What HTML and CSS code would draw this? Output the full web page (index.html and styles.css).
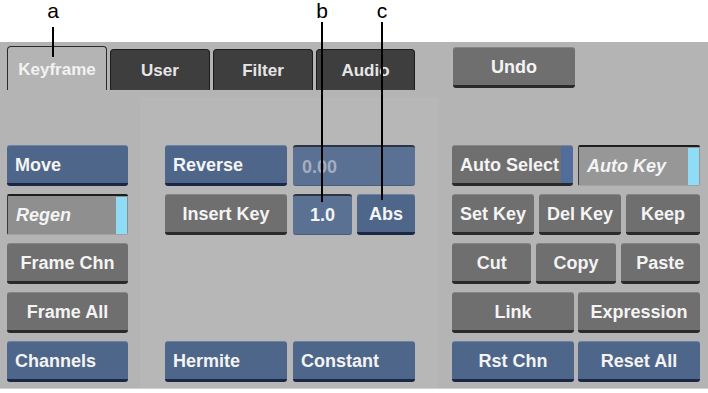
FILE: index.html
```html
<!DOCTYPE html>
<html lang="en">
<head>
  <meta charset="UTF-8" />
  <title>Keyframe Controls</title>
  <link rel="stylesheet" href="styles.css">
</head>
<body>
  <div class="page">
    <div class="callout callout-a"><span>a</span><i></i></div>
    <div class="callout callout-b"><span>b</span><i></i></div>
    <div class="callout callout-c"><span>c</span><i></i></div>

    <div class="panel">
      <div class="top">
        <div class="tabs">
          <div class="tab active">Keyframe</div>
          <div class="tab">User</div>
          <div class="tab">Filter</div>
          <div class="tab">Audio</div>
        </div>
        <div class="btn grey undo">Undo</div>
      </div>

      <div class="keys">
        <!-- row 1 -->
        <div class="btn blue left">Move</div>
        <div class="cell">
          <div class="btn blue left wide">Reverse</div>
          <div class="field dim wide">0.00</div>
        </div>
        <div class="cell tight">
          <div class="btn grey left select">Auto Select<span class="strip"></span></div>
          <div class="toggle wide">Auto Key<span class="lamp"></span></div>
        </div>

        <!-- row 2 -->
        <div class="toggle">Regen<span class="lamp"></span></div>
        <div class="cell">
          <div class="btn grey wide">Insert Key</div>
          <div class="field center small">1.0</div>
          <div class="btn blue small abs">Abs</div>
        </div>
        <div class="cell tight">
          <div class="btn grey">Set Key</div>
          <div class="btn grey">Del Key</div>
          <div class="btn grey">Keep</div>
        </div>

        <!-- row 3 -->
        <div class="btn grey">Frame Chn</div>
        <div class="cell"></div>
        <div class="cell tight">
          <div class="btn grey">Cut</div>
          <div class="btn grey">Copy</div>
          <div class="btn grey">Paste</div>
        </div>

        <!-- row 4 -->
        <div class="btn grey">Frame All</div>
        <div class="cell"></div>
        <div class="cell pair">
          <div class="btn grey">Link</div>
          <div class="btn grey">Expression</div>
        </div>

        <!-- row 5 -->
        <div class="btn blue left">Channels</div>
        <div class="cell">
          <div class="btn blue left wide">Hermite</div>
          <div class="btn blue left wide">Constant</div>
        </div>
        <div class="cell pair">
          <div class="btn blue">Rst Chn</div>
          <div class="btn blue">Reset All</div>
        </div>
      </div>
    </div>
  </div>
</body>
</html>
```

FILE: styles.css
```css
body { margin: 0; background: #fff; font-family: "Liberation Sans", Arial, sans-serif; }
.page { position: relative; padding-top: 42px; }

/* callout letters over the panel */
.callout { position: absolute; top: 0; width: 20px; display: flex; flex-direction: column; align-items: center; z-index: 2; }
.callout span { height: 22px; line-height: 22px; font-size: 21px; color: #000; }
.callout i { width: 2px; background: #000; }
.callout-a { left: 43px; }
.callout-a i { height: 30px; margin-top: 5px; }
.callout-b { left: 312px; }
.callout-b i { height: 180px; }
.callout-c { left: 372px; }
.callout-c i { height: 178px; }

.panel { background: #b4b4b4; border-bottom: 1px solid #cfcfcf; }

.top { display: flex; padding: 4px 0 7px 7px; height: 44px; }
.tabs { display: flex; gap: 3px; align-items: flex-end; }
.tab {
  width: 100px; height: 41px; box-sizing: border-box; display: flex; align-items: center; justify-content: center;
  padding-top: 2px; background: #3e3e3e; border: 1px solid #1c1c1c; border-bottom: 0; border-radius: 4px 4px 0 0;
  color: #e6e6e6; font-weight: bold; font-size: 17px;
}
.tab:last-child { width: 99px; }
.tab.active { height: 44px; background: #b4b4b4; border-color: #2a2a2a; color: #f2f2f2; }
.undo { width: 122px; margin: 1px 0 0 38px; }

.keys {
  display: grid; grid-template-columns: 121px 250px 248px; grid-auto-rows: 41px;
  column-gap: 37px; row-gap: 8px; padding: 48px 8px 6px 7px;
  background: linear-gradient(to right, #b4b4b4 140px, #b7b7b7 140px, #b7b7b7 438px, #b4b4b4 438px);
}
.cell { display: flex; gap: 6px; }
.cell.tight { gap: 5px; }
.cell.pair { gap: 4px; }
.cell > * { flex: 1; }
.cell > .wide { flex: 0 0 122px; }
.cell > .small { flex: 0 0 59px; }
.cell > .abs { flex: 0 0 58px; margin-left: -1px; }
.cell > .select { flex: 0 0 121px; }

.btn, .field, .toggle {
  box-sizing: border-box; height: 41px; display: flex; align-items: center; justify-content: center;
  padding: 2px 8px 0; border-radius: 3px; color: #f4f4f4; font-weight: bold; font-size: 18px; white-space: nowrap;
}
.grey { background: #6f6f6f; border-top: 1px solid #858585; border-bottom: 3px solid #2a2a2a; }
.blue { background: #4e6689; border-top: 1px solid #6b82a4; border-bottom: 3px solid #1c2745; }
.left { justify-content: flex-start; }

.field { background: #5b7193; border-top: 2px solid #2c3545; border-bottom: 1px solid #4a5e7c; justify-content: flex-start; padding-left: 9px; }
.field.center { justify-content: center; padding: 0; }
.field.dim { color: #a3aebf; }

.toggle {
  background: #8f8f8f; border-top: 2px solid #1e1e1e; border-left: 1px solid #3a3a3a; border-bottom: 1px solid #a2a2a2;
  justify-content: space-between; padding: 0 1px 0 8px; font-style: italic; border-radius: 2px;
}
.cell > .toggle { background: #979797; }
.lamp { width: 11px; height: 37px; background: #8fdcf6; }

.select { position: relative; padding-right: 12px; }
.strip { position: absolute; right: 0; top: 0; bottom: 0; width: 12px; background: #506d9b; border-radius: 0 3px 0 0; }
```
